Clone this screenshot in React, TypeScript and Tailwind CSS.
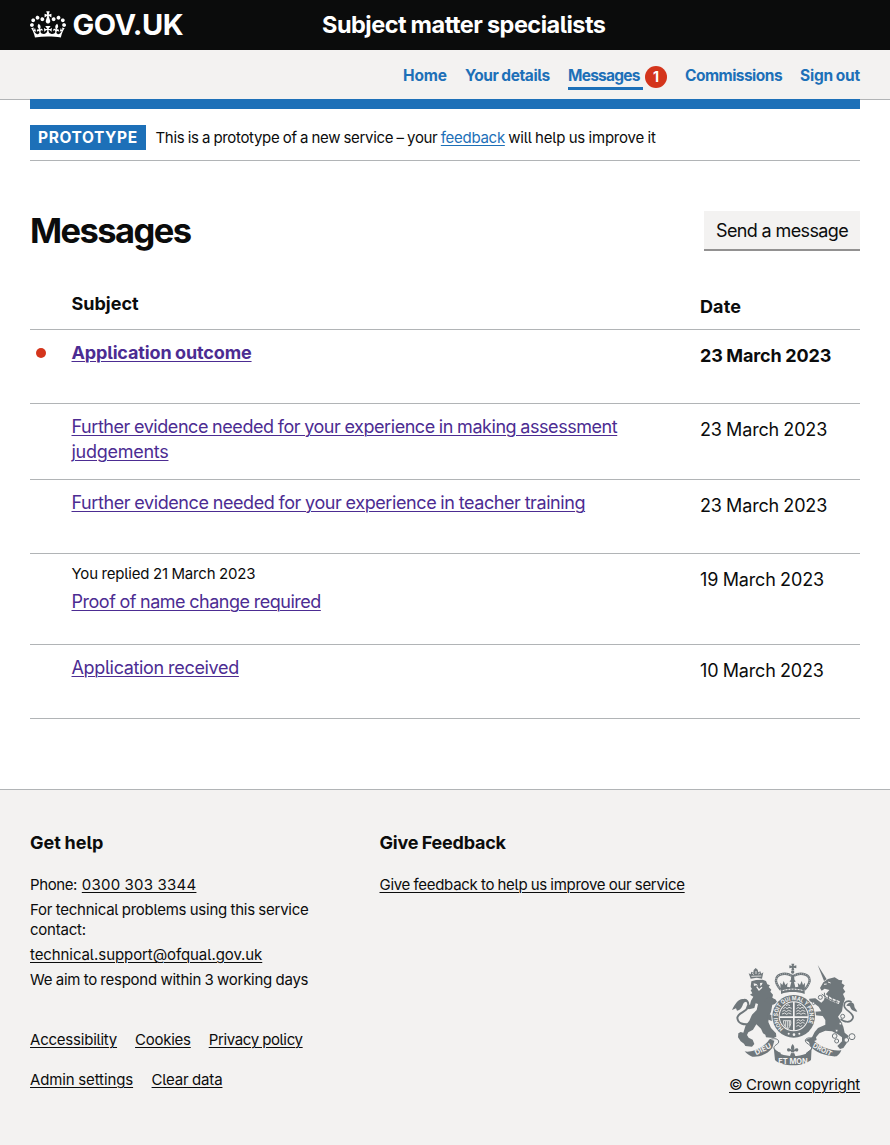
import type { ReactNode } from 'react';

const ink = '#6f777b';
const paper = '#f3f2f1';

function Crown() {
  return (
    <svg viewBox="0 0 132 97" className="h-[27px] w-9 shrink-0" fill="currentColor" aria-hidden="true">
      <path d="M25 30.2c3.5 1.5 7.7-.2 9.1-3.7 1.5-3.6-.2-7.8-3.9-9.2-3.6-1.4-7.6.3-9.1 3.9-1.4 3.5.3 7.5 3.9 9zM9 39.5c3.6 1.5 7.8-.2 9.2-3.7 1.5-3.6-.2-7.8-3.9-9.1-3.6-1.5-7.6.2-9.1 3.8-1.4 3.5.3 7.5 3.8 9zM4.4 57.2c3.5 1.5 7.7-.2 9.1-3.8 1.5-3.6-.2-7.7-3.9-9.1-3.5-1.5-7.6.3-9.1 3.8-1.4 3.5.3 7.6 3.9 9.1zm38.3-21.4c3.5 1.5 7.7-.2 9.1-3.8 1.5-3.6-.2-7.7-3.9-9.1-3.6-1.5-7.6.3-9.1 3.8-1.3 3.6.4 7.7 3.9 9.1zm64.4-5.6c-3.6 1.5-7.8-.2-9.1-3.7-1.5-3.6.2-7.8 3.8-9.2 3.6-1.4 7.7.3 9.2 3.9 1.3 3.5-.4 7.5-3.9 9zm15.9 9.3c-3.6 1.5-7.7-.2-9.1-3.7-1.5-3.6.2-7.8 3.7-9.1 3.6-1.5 7.7.2 9.2 3.8 1.5 3.5-.3 7.5-3.8 9zm4.7 17.7c-3.6 1.5-7.8-.2-9.2-3.8-1.5-3.6.2-7.7 3.9-9.1 3.6-1.5 7.7.3 9.2 3.8 1.3 3.5-.4 7.6-3.9 9.1zM89.3 35.8c-3.6 1.5-7.8-.2-9.2-3.8-1.4-3.6.2-7.7 3.9-9.1 3.6-1.5 7.7.3 9.2 3.8 1.4 3.6-.3 7.7-3.9 9.1zM69.7 17.7l8.9 4.7V9.3l-8.9 2.8c-.2-.3-.5-.6-.9-.9L72.4 0H59.6l3.5 11.2c-.3.3-.6.5-.9.9l-8.8-2.8v13.1l8.8-4.7c.3.3.6.7.9.9l-5 15.4v.1c-.2.8-.4 1.6-.4 2.4 0 4.1 3.1 7.5 7 8.1h.2c.3 0 .7.1 1 .1.4 0 .7 0 1-.1h.2c4-.6 7.1-4.1 7.1-8.1 0-.8-.1-1.7-.4-2.4V34l-5.1-15.4c.4-.2.7-.6 1-.9zM66 92.8c16.9 0 32.8 1.1 47.1 3.2 4-16.9 8.9-26.7 14-33.5l-9.6-3.4c1 4.9 1.1 7.2 0 10.2-1.5-1.4-3-4.3-4.2-8.7L108.6 76c2.8-2 5-3.2 7.5-3.3-4.4 9.4-10 11.9-13.6 11.2-4.3-.8-6.3-4.6-5.6-7.9 1-4.7 5.7-5.9 8-.5 4.3-8.7-3-11.4-7.6-8.8 7.1-7.2 7.9-13.5 2.1-21.1-8 6.1-8.1 12.3-4.5 20.8-4.7-5.4-12.1-2.5-9.5 6.2 3.4-5.2 7.9-2 7.2 3.1-.6 4.3-6.4 7.8-13.5 7.2-10.3-.9-10.9-8-11.2-13.8 2.5-.5 7.1 1.8 11 7.3L80.2 60c-4.1 4.4-8 5.3-12.3 5.4 1.4-4.4 8-11.6 8-11.6H55.5s6.4 7.2 7.9 11.6c-4.2-.1-8-1-12.3-5.4l1.4 16.4c3.9-5.5 8.5-7.7 10.9-7.3-.3 5.8-.9 12.8-11.1 13.8-7.2.6-12.9-2.9-13.5-7.2-.7-5 3.8-8.3 7.1-3.1 2.7-8.7-4.6-11.6-9.4-6.2 3.7-8.5 3.6-14.7-4.6-20.8-5.8 7.6-5 13.9 2.2 21.1-4.7-2.6-11.9.1-7.7 8.8 2.3-5.5 7.1-4.2 8.1.5.7 3.3-1.3 7.1-5.7 7.9-3.5.7-9-1.8-13.5-11.2 2.5.1 4.7 1.3 7.5 3.3l-4.7-15.4c-1.2 4.4-2.7 7.2-4.3 8.7-1.1-3-.9-5.3 0-10.2l-9.5 3.4c5 6.9 9.9 16.7 14 33.5 14.8-2.1 30.8-3.2 47.7-3.2z" />
    </svg>
  );
}

function RoyalArms() {
  return (
    <svg viewBox="33 20 381 312" className="block h-[104px] w-[127px]" fill={ink} aria-hidden="true">
      {/* lion */}
      <path d="M92 70L86 54l6 3 2-8 6 3 1-8 6-6 6 5 2 8 6-3 3 7 6-4-4 19-16-3z" />
      <path d="M94 63l30-1M97 53l4 5M108 47v9M119 52l-3 5" stroke={paper} strokeWidth="2.5" fill="none" />
      <path d="M94 78l14-4 20-1 10 4 4 10 8 3-4 5 8 8-3 6 8 9-2 9 10 9-10 12-4 22-6 12-2 18 8 18 15 16 1 10-8 4-23-2-2-8-7-4-6-14-14-13-10 16-14 8-4 8 5 8 12 6 5 13-7 8-20-2-4-7-10-7-8-12 1-12 7-4 8 2 7-22 11-14 8-18 14-14 4-18-7-2-4 14-16 4-9-3 3-9 9-2 3-12 7-12-10-6 7-4-5-9 4-4-4-7z" />
      <path d="M101 84l9 2 4 6-5-2-7 2zM120 83l8-1-3 7-4 4z" fill={paper} />
      <path d="M110 94l7 10 9-8" fill="none" stroke={paper} strokeWidth="4" />
      <path d="M90 206c-20 3-36-1-38-18 0-15 25-17 31-31 6-15-4-28-14-22-7 4-4 14-11 20" fill="none" stroke={ink} strokeWidth="6" />
      <path d="M36 164c8-16 18-33 32-33 10 0 14 4 15 9-9-2-13 3-16 12-4 10-10 13-16 14l-3-7z" />
      <path d="M146 124l20 8 7 10-14 6-18-6-8-6zM142 174l20 9 10 12-10 5-20-8z" />

      {/* unicorn */}
      <path d="M293 29l27 43-8 5z" />
      <path d="M300 98L310 81L324 71L344 66L357 74L367 75L365 84L374 90L369 99L376 109L369 116L375 130L369 148L366 168L354 184L362 196L370 214L374 232L386 242L378 254L380 264L370 278L360 281L352 272L366 258L366 246L352 236L336 228L316 226L298 234L288 246L290 254L270 262L256 254L276 246L284 230L294 218L316 208L316 194L308 182L286 180L284 169L304 168L296 154L280 142L267 138L268 130L286 129L304 142L312 134L316 118L328 104L314 100L305 106Z" />
      <path d="M305 112l12 10 18 11 23 9" fill="none" stroke={paper} strokeWidth="9" />
      <path d="M305 116l14 10 18 10 18 5M313 112l2 14M325 119l1 14M337 125l-1 14M349 131l-2 12" fill="none" stroke={ink} strokeWidth="3" />
      <path d="M324 80l8 3M312 87l8-1" stroke={paper} strokeWidth="3" />
      <path d="M362 190c10 12 30 13 36 0 8-14-22-24-25-37-3-15 13-19 22-12" fill="none" stroke={ink} strokeWidth="5" />
      <path d="M379 151c8-14 25-12 24 2 0 6 6 9 9 16-14-1-20-7-22-16z" />
      <g fill={paper} stroke={ink} strokeWidth="3">
        <circle cx="301" cy="126" r="6" /><circle cx="280" cy="144" r="4" /><circle cx="368" cy="183" r="6" />
        <circle cx="361" cy="205" r="4" /><circle cx="350" cy="226" r="4" /><circle cx="344" cy="242" r="7" />
        <circle cx="350" cy="257" r="6" /><circle cx="379" cy="254" r="7" /><circle cx="396" cy="244" r="9" />
      </g>

      {/* crown */}
      <path d="M214 25h9l-2 7 8-2v9l-8-2 2 8h-9l2-8-8 2v-9l8 2z" />
      <circle cx="218" cy="50" r="5" />
      <path d="M182 103c-11-13-17-24-13-34 5-14 29-18 46-8M254 103c11-13 18-24 14-34-5-14-29-18-46-8" fill="none" stroke={ink} strokeWidth="7" />
      <path d="M182 103c-11-13-17-24-13-34 5-14 29-18 46-8M254 103c11-13 18-24 14-34-5-14-29-18-46-8" fill="none" stroke={paper} strokeWidth="2" strokeDasharray="2 4" />
      <path d="M214 58h8l2 22h-12z" />
      <path d="M181 82l6 7 4-12 5 12 7-7-2 12 9 2 4-16-6-2 10-7 10 7-6 2 4 16 9-2-2-12 7 7 5-12 4 12 6-7-1 25c-22-9-50-9-72 0z" />
      <path d="M183 106c21-9 49-9 71 0v10c-22-8-50-8-71 0z" />
      <path d="M188 106c19-6 42-6 62 0" fill="none" stroke={paper} strokeWidth="3" strokeDasharray="6 3" />

      {/* garter and shield */}
      <circle cx="221" cy="183" r="67" fill={paper} />
      <circle cx="221" cy="183" r="64" />
      <circle cx="221" cy="183" r="45" fill={paper} />
      <circle cx="221" cy="183" r="42" />
      <defs>
        <path id="garter" d="M191 220A48 48 0 0 1 187 149A48 48 0 0 1 255 149A48 48 0 0 1 251 220" />
      </defs>
      <text fill={paper} className="font-['Inter'] text-[18px] font-bold">
        <textPath href="#garter" textLength="213" lengthAdjust="spacingAndGlyphs">HONI SOIT QUI MAL Y PENSE</textPath>
      </text>
      <path d="M219 140h5v86h-5zM178 183h86v5h-86z" fill={paper} />
      <g fill="none" stroke={paper} strokeWidth="2.5">
        <path d="M190 160l6-4 5 4 6-4 8 3M187 168l6-3 6 4 6-4 9 3M186 176l8-3 6 4 6-4 8 3M198 151l6-3 6 3" />
        <path d="M229 160l6-4 5 4 6-4 6 3M229 168l6-3 6 4 6-4 9 3M229 176l8-3 6 4 6-4 8 3M231 151l6-3 6 3" />
        <path d="M190 196h22c2 10-2 20-9 25-8-5-12-12-13-25zM197 197v17M203 197v22M208 197v15" />
        <path d="M230 196l6-3 6 4 6-4 6 3M229 204l6-3 6 4 6-4 7 3M229 213l6-3 6 4 6-4" />
      </g>
      <g fill={paper}><circle cx="206" cy="235" r="3" /><circle cx="222" cy="238" r="4" /><circle cx="238" cy="235" r="3" /></g>

      {/* motto ribbon */}
      <path d="M74 288c14 6 58-8 74-36l8 2 7 2-6 22c-14 18-38 28-60 26-8-3-17-9-23-16z" />
      <path d="M150 253c14-6 27-2 26 7-1 8-16 9-14 20 2 7 9 10 14 12l-2 9" fill="none" stroke={ink} strokeWidth="3" />
      <path d="M364 284c-16 6-66-6-86-32l-13 3 6 18c14 18 52 32 79 30 8-6 12-12 14-19z" />
      <path d="M282 251c-14-7-27-2-26 6 1 8 18 12 19 20 1 7-7 10-12 13l-2 10" fill="none" stroke={ink} strokeWidth="3" />
      <path d="M161 276c5 13 31 24 58 24s53-9 56-24l-2 38c-10 9-31 16-54 16s-45-6-54-16z" />
      <path d="M182 296l3-27c10-7 58-9 70 1l3 25c-24 10-52 9-76 1z" fill={paper} />
      <path d="M218 266c-5 6-7 12-3 19-5-8-13-8-14-2 0 5 6 8 9 4 3 1 5 3 3 7l-3 8h16l-3-8c-2-4 0-6 3-7 3 4 9 1 9-4-1-6-9-6-14 2 4-7 2-13-3-19z" />
      <path d="M209 292h18" stroke={paper} strokeWidth="2" />
      <g fill={paper} className="font-['Inter'] text-[21px] font-bold" textAnchor="middle">
        <text transform="translate(132 288) rotate(-27)" textLength="52" lengthAdjust="spacingAndGlyphs">DIEU</text>
        <text transform="translate(219 325)" textLength="88" lengthAdjust="spacingAndGlyphs">ET MON</text>
        <text transform="translate(304 289) rotate(27)" textLength="62" lengthAdjust="spacingAndGlyphs">DROIT</text>
      </g>
    </svg>
  );
}

const link = 'underline decoration-1 underline-offset-2';

function NavLink({ children, className }: { children: ReactNode; className: string }) {
  return <a href="#" className={`block ${className}`}>{children}</a>;
}

type Message = { subject: ReactNode; tracking: string; date: string; dateTracking: string; height: string; unread?: boolean; replied?: string };

const messages: Message[] = [
  { subject: 'Application outcome', tracking: 'tracking-[-0.14px]', date: '23 March 2023', dateTracking: 'tracking-[-0.12px]', height: 'h-[74px]', unread: true },
  { subject: <>Further evidence needed for your experience in making assessment <span className="tracking-[-0.27px]">judgements</span></>, tracking: 'tracking-[-0.447px]', date: '23 March 2023', dateTracking: 'tracking-[-0.18px]', height: 'h-[76px]' },
  { subject: 'Further evidence needed for your experience in teacher training', tracking: 'tracking-[-0.413px]', date: '23 March 2023', dateTracking: 'tracking-[-0.18px]', height: 'h-[74px]' },
  { subject: 'Proof of name change required', tracking: 'tracking-[-0.475px]', date: '19 March 2023', dateTracking: 'tracking-[-0.14px]', height: 'h-[91px]', replied: 'You replied 21 March 2023' },
  { subject: 'Application received', tracking: 'tracking-[-0.33px]', date: '10 March 2023', dateTracking: 'tracking-[-0.17px]', height: 'h-[74px]' },
];

export default function App() {
  return (
    <div className="flex min-h-[1145px] flex-col bg-white font-['Inter','Liberation_Sans',sans-serif] text-[15px] leading-5 whitespace-nowrap text-[#0b0c0c] [font-feature-settings:'cv05'] [word-spacing:-0.5px]">
      <header className="flex h-[50px] items-center bg-[#0b0c0c] px-[30px] text-white">
        <a href="#" className="flex w-[292px] items-center pb-0.5">
          <Crown />
          <span className="ml-[6.5px] pt-0.5 text-[29px] leading-[30px] font-bold tracking-[-0.5px]">GOV.UK</span>
        </a>
        <a href="#" className="text-[23.5px] leading-[30px] font-bold tracking-[-0.51px]">Subject matter specialists</a>
      </header>

      <nav className="flex h-[49px] items-start justify-end gap-[18px] bg-[#f3f2f1] px-[30px] pt-4 text-[15.5px] font-bold text-[#1d70b8]">
        <NavLink className="w-11 tracking-[-0.12px]">Home</NavLink>
        <NavLink className="w-[85px] tracking-[-0.4px]">Your details</NavLink>
        <div className="flex items-start gap-0.5">
          <NavLink className="w-[75px] border-b-[3px] border-[#1d70b8] pb-px tracking-[-0.75px]">Messages</NavLink>
          <span className="flex size-[22px] items-center justify-center rounded-full bg-[#d4351c] text-sm text-white">1</span>
        </div>
        <NavLink className="w-[97px] tracking-[-0.53px]">Commissions</NavLink>
        <NavLink className="w-[60px] tracking-[-0.23px]">Sign out</NavLink>
      </nav>
      <div className="h-2.5 bg-[linear-gradient(#b1b4b6_1px,transparent_1px)] px-[30px]">
        <div className="h-full bg-[#1d70b8]" />
      </div>

      <main className="px-[30px]">
        <div className="flex h-[52px] items-start gap-[9.5px] border-b border-[#b1b4b6] pt-4">
          <strong className="h-[25px] w-[116px] bg-[#1d70b8] px-2 text-[15.5px] leading-[25px] font-bold tracking-[0.6px] text-white">PROTOTYPE</strong>
          <p className="pt-[3px] tracking-[-0.33px]">
            This is a prototype of a new service – your <a href="#" className={`tracking-[-0.29px] text-[#1d70b8] ${link}`}>feedback</a> <span className="tracking-[-0.21px]">will help us improve it</span>
          </p>
        </div>

        <div className="mt-[50px] flex h-10 items-center justify-between">
          <h1 className="text-[34.5px] leading-10 font-bold tracking-[-1.58px]">Messages</h1>
          <button className="h-10 w-[156px] border-b-2 border-[#929191] bg-[#f3f2f1] pt-0.5 text-[18px] tracking-[-0.63px]">Send a message</button>
        </div>

        <div className="mt-[30px] text-[18px] leading-[25px]">
          <div className="grid h-[49px] grid-cols-[41.5px_628.5px_160px] border-b border-[#b1b4b6] pt-2.5 font-bold">
            <span />
            <span>Subject</span>
            <span className="pt-[3px] tracking-[0.1px]">Date</span>
          </div>
          {messages.map((m, i) => (
            <div key={i} className={`grid grid-cols-[41.5px_628.5px_160px] border-b border-[#b1b4b6] pt-2.5 ${m.height} ${m.unread ? 'font-bold' : ''}`}>
              <span>{m.unread && <i className="mt-2 ml-1.5 block size-2.5 rounded-full bg-[#d4351c]" />}</span>
              <div className="pr-16 whitespace-normal">
                {m.replied && <p className="mb-[5px] text-[15px] leading-5 tracking-[-0.16px]">{m.replied}</p>}
                <a href="#" className={`text-[#4c2c92] ${link} ${m.tracking}`}>{m.subject}</a>
              </div>
              <span className={`pt-[3px] ${m.dateTracking}`}>{m.date}</span>
            </div>
          ))}
        </div>
      </main>

      <footer className="mt-[70px] flex grow flex-col border-t border-[#b1b4b6] bg-[#f3f2f1] px-[30px] pt-10">
        <div className="flex h-[160px]">
          <section className="w-[349.5px]">
            <h2 className="mb-5 text-[18px] leading-[25px] font-bold">Get help</h2>
            <ul className="flex flex-col gap-[5px]">
              <li className="tracking-[-0.4px]">Phone: <a href="#" className={`ml-[1.5px] tracking-[0.28px] ${link}`}>0300 303 3344</a></li>
              <li className="tracking-[-0.24px]">For technical problems using this service<br />contact:</li>
              <li><a href="#" className={`tracking-[-0.09px] ${link}`}>technical.support@ofqual.gov.uk</a></li>
              <li className="tracking-[-0.25px]">We aim to respond within 3 working days</li>
            </ul>
          </section>
          <section>
            <h2 className="mb-5 text-[18px] leading-[25px] font-bold tracking-[-0.22px]">Give Feedback</h2>
            <a href="#" className={`tracking-[-0.29px] ${link}`}>Give feedback to help us improve our service</a>
          </section>
        </div>
        <div className="flex justify-between">
          <div className="flex flex-col gap-5 pt-10">
            <div className="flex gap-[18px]">
              <a href="#" className={`tracking-[-0.22px] ${link}`}>Accessibility</a>
              <a href="#" className={`tracking-[-0.26px] ${link}`}>Cookies</a>
              <a href="#" className={`tracking-[-0.36px] ${link}`}>Privacy policy</a>
            </div>
            <div className="flex gap-[18.5px]">
              <a href="#" className={`tracking-[-0.11px] ${link}`}>Admin settings</a>
              <a href="#" className={`tracking-[-0.17px] ${link}`}>Clear data</a>
            </div>
          </div>
          <div className="-mt-7 flex flex-col items-end">
            <div className="mr-0.5"><RoyalArms /></div>
            <a href="#" className={`mt-[9px] tracking-[-0.22px] ${link}`}>© Crown copyright</a>
          </div>
        </div>
      </footer>
    </div>
  );
}
